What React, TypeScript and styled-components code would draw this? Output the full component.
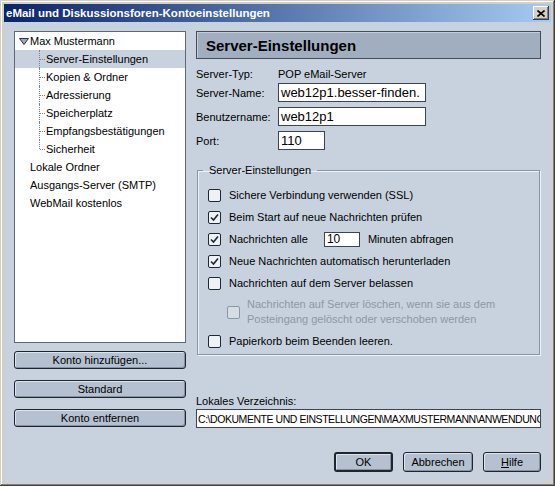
import React from 'react';
import styled, { createGlobalStyle } from 'styled-components';

const GlobalStyle = createGlobalStyle`
  html, body {
    margin: 0;
    padding: 0;
    background: #c7d2de;
  }
  body {
    font-family: "Liberation Sans", Arial, sans-serif;
    font-size: 11px;
    color: #000;
  }
  * {
    box-sizing: border-box;
  }
`;

const Window = styled.div`
  width: 555px;
  height: 486px;
  padding: 4px;
  background: #d4d0c8;
  box-shadow: inset -1px -1px 0 #404040, inset 1px 1px 0 #d4d0c8,
    inset -2px -2px 0 #808080, inset 2px 2px 0 #ffffff;
  display: flex;
  flex-direction: column;
  overflow: hidden;
`;

const TitleBar = styled.div`
  height: 18px;
  flex-shrink: 0;
  display: flex;
  align-items: center;
  padding-left: 2px;
  background: linear-gradient(to right, #0a246a, #a6caf0);
  color: #fff;
  font-weight: bold;
  font-size: 11.5px;
`;

const CloseButton = styled.div`
  width: 16px;
  height: 14px;
  margin-left: auto;
  margin-right: 2px;
  background: #d4d0c8;
  display: flex;
  align-items: center;
  justify-content: center;
  box-shadow: inset -1px -1px 0 #404040, inset 1px 1px 0 #ffffff,
    inset -2px -2px 0 #808080;
`;

const Client = styled.div`
  flex: 1;
  min-height: 0;
  background: #c7d2de;
  display: grid;
  grid-template-columns: 172px minmax(0, 1fr);
  column-gap: 10px;
  padding: 9px 10px 10px 10px;
`;

const LeftColumn = styled.div`
  display: flex;
  flex-direction: column;
`;

const Tree = styled.div`
  height: 312px;
  background: #fff;
  border: 1px solid #5d6977;
  margin-bottom: 8px;
`;

const TreeRow = styled.div<{ $child?: boolean; $selected?: boolean; $last?: boolean }>`
  position: relative;
  height: 18px;
  display: flex;
  align-items: center;
  white-space: nowrap;
  padding-left: ${p => (p.$child ? 31 : 15)}px;
  background: ${p => (p.$selected ? '#c7d2de' : 'transparent')};

  ${p =>
    p.$child &&
    `
    &::before {
      content: '';
      position: absolute;
      left: 24px;
      top: 0;
      height: ${p.$last ? 9 : 18}px;
      border-left: 1px dotted #808080;
    }
    &::after {
      content: '';
      position: absolute;
      left: 25px;
      top: 9px;
      width: 5px;
      border-top: 1px dotted #808080;
    }
  `}
`;

const Twisty = styled.svg`
  position: absolute;
  left: 4px;
  top: 6px;
`;

const PushButton = styled.div<{ $width?: number; $default?: boolean }>`
  height: ${p => (p.$width ? 20 : 18)}px;
  width: ${p => (p.$width ? `${p.$width}px` : '100%')};
  flex-shrink: 0;
  display: flex;
  align-items: center;
  justify-content: center;
  background: #b5c1d0;
  border: ${p => (p.$default ? 2 : 1)}px solid #1f252c;
  border-radius: 3px;
  box-shadow: inset 1px 1px 0 #dde4ec, inset -1px -1px 0 #8592a2;
  font-size: 11px;
  margin-bottom: ${p => (p.$width ? 0 : 11)}px;

  u {
    text-decoration: underline;
  }
`;

const RightColumn = styled.div`
  display: flex;
  flex-direction: column;
  min-width: 0;
`;

const PageHeader = styled.div`
  height: 28px;
  flex-shrink: 0;
  display: flex;
  align-items: center;
  padding-left: 9px;
  background: #a0aec0;
  border: 1px solid #444d58;
  box-shadow: inset 1px 1px 0 #c3ccd7;
  font-size: 15px;
  font-weight: bold;
`;

const FormRow = styled.div<{ $top: number; $height: number }>`
  display: flex;
  align-items: center;
  height: ${p => p.$height}px;
  margin-top: ${p => p.$top}px;
  flex-shrink: 0;
  min-width: 0;
`;

const FieldLabel = styled.span`
  width: 82px;
  flex-shrink: 0;
`;

const TextField = styled.div<{ $width?: number; $small?: boolean }>`
  width: ${p => (p.$width ? `${p.$width}px` : '100%')};
  flex-shrink: 0;
  height: ${p => (p.$small ? 15 : 19)}px;
  background: #fff;
  border: 1px solid #3c4550;
  padding-left: 2px;
  display: flex;
  align-items: center;
  overflow: hidden;
  white-space: nowrap;
  font-size: ${p => (p.$small ? 12 : 13)}px;
`;

const PathField = styled(TextField)`
  font-size: 10.5px;
  letter-spacing: -0.45px;
  padding-left: 1px;
`;

const GroupBox = styled.fieldset`
  margin: 14px 1px 0 1px;
  padding: 10px 10px 5px 10px;
  border: 1px solid #8795a7;
  box-shadow: 1px 1px 0 #eef2f6, inset 1px 1px 0 #eef2f6;
  display: flex;
  flex-direction: column;
  gap: 6px;
  min-width: 0;
`;

const Legend = styled.legend`
  margin-left: -5px;
  padding: 0 6px;
  font-size: 11px;
  line-height: 13px;
`;

const CheckRow = styled.div<{ $indent?: boolean; $disabled?: boolean }>`
  display: flex;
  align-items: center;
  gap: ${p => (p.$indent ? 7 : 8)}px;
  min-height: 16px;
  padding-left: ${p => (p.$indent ? 19 : 0)}px;
  color: ${p => (p.$disabled ? '#8d97a4' : '#000')};
  line-height: 15px;
`;

const Box = styled.span<{ $disabled?: boolean }>`
  width: 13px;
  height: 13px;
  flex-shrink: 0;
  border: 1px solid ${p => (p.$disabled ? '#8d97a4' : '#1e2833')};
  border-radius: 2px;
  background: ${p => (p.$disabled ? '#d6dde5' : '#eef1f5')};
  display: flex;
  align-items: center;
  justify-content: center;
`;

const Inline = styled.span<{ $gap: number }>`
  margin-left: ${p => p.$gap}px;
`;

const ButtonRow = styled.div`
  margin-top: auto;
  display: flex;
  justify-content: flex-end;
  gap: 10px;
`;

const Check = ({ checked, disabled }: { checked?: boolean; disabled?: boolean }) => (
  <Box $disabled={disabled}>
    {checked && (
      <svg width="9" height="9" viewBox="0 0 9 9">
        <path d="M1 4.5 L3.5 7 L8 1.5" fill="none" stroke="#1e2833" strokeWidth="1.6" />
      </svg>
    )}
  </Box>
);

const children = [
  'Server-Einstellungen',
  'Kopien & Ordner',
  'Adressierung',
  'Speicherplatz',
  'Empfangsbestätigungen',
  'Sicherheit',
];

export default function App() {
  return (
    <>
      <GlobalStyle />
      <Window>
        <TitleBar>
          eMail und Diskussionsforen-Kontoeinstellungen
          <CloseButton>
            <svg width="8" height="7" viewBox="0 0 8 7">
              <path d="M0.5 0.5 L7.5 6.5 M7.5 0.5 L0.5 6.5" stroke="#000" strokeWidth="1.6" />
            </svg>
          </CloseButton>
        </TitleBar>
        <Client>
          <LeftColumn>
            <Tree>
              <TreeRow>
                <Twisty width="10" height="7" viewBox="0 0 10 7">
                  <polygon points="0.5,0.5 9.5,0.5 5,6.5" fill="#9aa8bb" stroke="#2a323c" />
                </Twisty>
                Max Mustermann
              </TreeRow>
              {children.map((c, i) => (
                <TreeRow key={c} $child $selected={i === 0} $last={i === children.length - 1}>
                  {c}
                </TreeRow>
              ))}
              <TreeRow>Lokale Ordner</TreeRow>
              <TreeRow>Ausgangs-Server (SMTP)</TreeRow>
              <TreeRow>WebMail kostenlos</TreeRow>
            </Tree>
            <PushButton>Konto hinzufügen...</PushButton>
            <PushButton>Standard</PushButton>
            <PushButton>Konto entfernen</PushButton>
          </LeftColumn>

          <RightColumn>
            <PageHeader>Server-Einstellungen</PageHeader>
            <FormRow $top={8} $height={13}>
              <FieldLabel>Server-Typ:</FieldLabel>
              POP eMail-Server
            </FormRow>
            <FormRow $top={3} $height={19}>
              <FieldLabel>Server-Name:</FieldLabel>
              <TextField $width={148}>web12p1.besser-finden.</TextField>
            </FormRow>
            <FormRow $top={5} $height={19}>
              <FieldLabel>Benutzername:</FieldLabel>
              <TextField $width={148}>web12p1</TextField>
            </FormRow>
            <FormRow $top={5} $height={19}>
              <FieldLabel>Port:</FieldLabel>
              <TextField $width={47}>110</TextField>
            </FormRow>

            <GroupBox>
              <Legend>Server-Einstellungen</Legend>
              <CheckRow>
                <Check />
                Sichere Verbindung verwenden (SSL)
              </CheckRow>
              <CheckRow>
                <Check checked />
                Beim Start auf neue Nachrichten prüfen
              </CheckRow>
              <CheckRow>
                <Check checked />
                Nachrichten alle
                <Inline $gap={8}>
                  <TextField $width={36} $small>10</TextField>
                </Inline>
                Minuten abfragen
              </CheckRow>
              <CheckRow>
                <Check checked />
                Neue Nachrichten automatisch herunterladen
              </CheckRow>
              <CheckRow>
                <Check />
                Nachrichten auf dem Server belassen
              </CheckRow>
              <CheckRow $indent $disabled>
                <Check disabled />
                <span>
                  Nachrichten auf Server löschen, wenn sie aus dem
                  <br />
                  Posteingang gelöscht oder verschoben werden
                </span>
              </CheckRow>
              <CheckRow>
                <Check />
                Papierkorb beim Beenden leeren.
              </CheckRow>
            </GroupBox>

            <FormRow $top={39} $height={13}>
              Lokales Verzeichnis:
            </FormRow>
            <FormRow $top={2} $height={19}>
              <PathField>C:\DOKUMENTE UND EINSTELLUNGEN\MAXMUSTERMANN\ANWENDUNG</PathField>
            </FormRow>

            <ButtonRow>
              <PushButton $width={59} $default>OK</PushButton>
              <PushButton $width={70}>Abbrechen</PushButton>
              <PushButton $width={58}>
                <span>
                  <u>H</u>ilfe
                </span>
              </PushButton>
            </ButtonRow>
          </RightColumn>
        </Client>
      </Window>
    </>
  );
}
